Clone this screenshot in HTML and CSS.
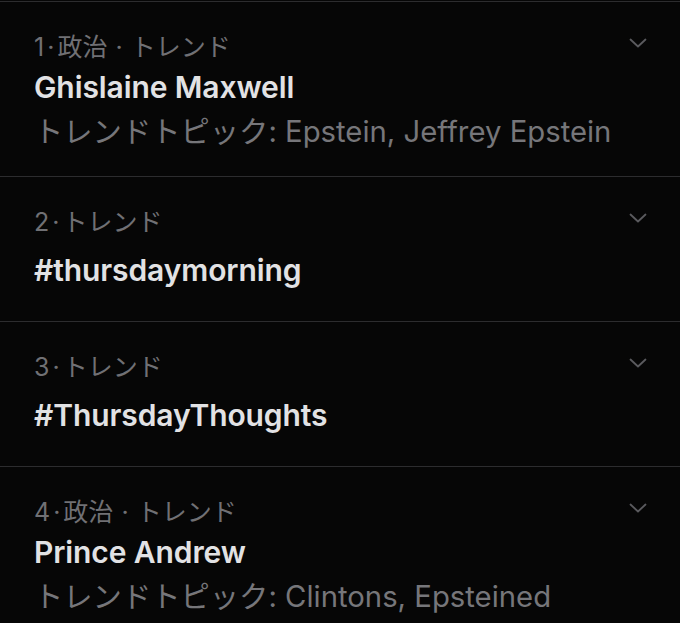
FILE: index.html
```html
<!DOCTYPE html>
<html lang="ja">
<head>
  <meta charset="UTF-8">
  <meta name="viewport" content="width=device-width, initial-scale=1.0">
  <title>トレンド</title>
  <link rel="stylesheet" href="styles.css">
</head>
<body>
  <ul class="trends">
    <li class="trend">
      <div class="trend-head">
        <span class="trend-meta">1<span class="dot">·</span>政治 <span class="sep">·</span> トレンド</span>
        <svg class="chevron" viewBox="0 0 18 10" width="18" height="10"><path d="M1.5 1.5 L9 8.5 L16.5 1.5"/></svg>
      </div>
      <div class="trend-name">Ghislaine Maxwell</div>
      <div class="trend-context">トレンドトピック: Epstein, Jeffrey Epstein</div>
    </li>
    <li class="trend trend--plain">
      <div class="trend-head">
        <span class="trend-meta">2<span class="dot">·</span>トレンド</span>
        <svg class="chevron" viewBox="0 0 18 10" width="18" height="10"><path d="M1.5 1.5 L9 8.5 L16.5 1.5"/></svg>
      </div>
      <div class="trend-name">#thursdaymorning</div>
    </li>
    <li class="trend trend--plain">
      <div class="trend-head">
        <span class="trend-meta">3<span class="dot">·</span>トレンド</span>
        <svg class="chevron" viewBox="0 0 18 10" width="18" height="10"><path d="M1.5 1.5 L9 8.5 L16.5 1.5"/></svg>
      </div>
      <div class="trend-name">#ThursdayThoughts</div>
    </li>
    <li class="trend">
      <div class="trend-head">
        <span class="trend-meta">4<span class="dot">·</span>政治 <span class="sep">·</span> トレンド</span>
        <svg class="chevron" viewBox="0 0 18 10" width="18" height="10"><path d="M1.5 1.5 L9 8.5 L16.5 1.5"/></svg>
      </div>
      <div class="trend-name">Prince Andrew</div>
      <div class="trend-context">トレンドトピック: Clintons, Epsteined</div>
    </li>
  </ul>
</body>
</html>
```

FILE: styles.css
```css
* { box-sizing: border-box; }
html, body { margin: 0; background: #060606; }
body { font-family: Inter, 'Noto Sans CJK JP', sans-serif; overflow: hidden; padding-top: 1px; }
.trends { list-style: none; margin: 0; padding: 0; border-top: 1px solid #2c2c2e; }
.trend { padding: 30px 33px 26px 34px; border-bottom: 1px solid #2c2c2e; }
.trend-head { display: flex; justify-content: space-between; align-items: center; height: 30px; }
.trend-meta { font-size: 25px; line-height: 30px; color: #707074; }
.dot { margin: 0 3px; }
.sep { margin: 0 1px; }
.chevron { fill: none; stroke: #5a5a5e; stroke-width: 1.8; stroke-linecap: round; stroke-linejoin: round; margin-top: -8px; }
.trend-name { margin-top: 7px; font-size: 30px; line-height: 36px; font-weight: 600; color: #e2e2e4; letter-spacing: -0.1px; }
.trend-context { margin-top: 9px; font-size: 29.3px; line-height: 36px; color: #76767a; }
.trend--plain { padding-bottom: 33px; }
.trend--plain .trend-name { margin-top: 15px; }
```
